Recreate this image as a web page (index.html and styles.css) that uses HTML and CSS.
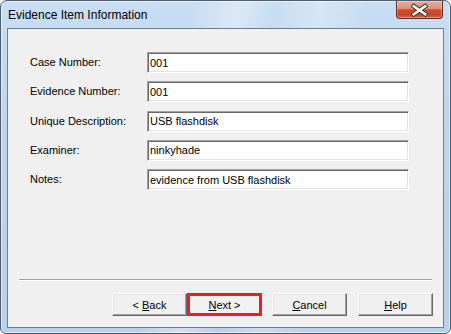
FILE: index.html
```html
<!DOCTYPE html>
<html lang="en">
<head>
  <meta charset="UTF-8" />
  <title>Evidence Item Information</title>
  <link rel="stylesheet" href="styles.css">
</head>
<body>

  <div class="window">
    <!-- title bar -->
    <div class="titlebar">
      <span class="title">Evidence Item Information</span>
      <button class="close" aria-label="Close">
        <svg width="47" height="18" viewBox="0 0 47 18">
          <path d="M17.5 5 L29.5 13.5 M29.5 5 L17.5 13.5" stroke="#3b3b3b" stroke-width="4.6" stroke-linecap="square" fill="none"/>
          <path d="M17.5 5 L29.5 13.5 M29.5 5 L17.5 13.5" stroke="#ffffff" stroke-width="2.6" stroke-linecap="square" fill="none"/>
        </svg>
      </button>
    </div>

    <!-- dialog body -->
    <div class="client">
      <div class="fields">
        <label>Case Number:</label>
        <input class="text" type="text" value="001">
        <label>Evidence Number:</label>
        <input class="text" type="text" value="001">
        <label>Unique Description:</label>
        <input class="text" type="text" value="USB flashdisk">
        <label>Examiner:</label>
        <input class="text" type="text" value="ninkyhade">
        <label>Notes:</label>
        <input class="text" type="text" value="evidence from USB flashdisk">
      </div>

      <div class="separator"></div>

      <div class="buttons">
        <button class="btn">&lt; <u>B</u>ack</button>
        <button class="btn btn-next"><u>N</u>ext &gt;</button>
        <button class="btn btn-cancel"><u>C</u>ancel</button>
        <button class="btn btn-help"><u>H</u>elp</button>
      </div>
    </div>
  </div>

</body>
</html>
```

FILE: styles.css
```css
/* ===== base ===== */
*{box-sizing:border-box;}
html,body{margin:0;height:100%;}
body{
  background:#fff;overflow:hidden;
  font-family:'Liberation Sans',Arial,sans-serif;font-size:11px;color:#000;
}

/* ===== window frame ===== */
.window{
  width:451px;height:334px;
  display:flex;flex-direction:column;
  border:1px solid #4d5c6d;border-radius:7px 7px 6px 6px;
  background:
    linear-gradient(100deg,rgba(255,255,255,0) 38%,rgba(255,255,255,.35) 47%,rgba(255,255,255,0) 54%,rgba(255,255,255,.25) 63%,rgba(255,255,255,0) 72%),
    linear-gradient(#c9def3,#bcd4ec 40%,#b8d0ea);
  box-shadow:inset 0 0 0 1px rgba(255,255,255,.55);
}

/* ===== title bar ===== */
.titlebar{height:27px;display:flex;align-items:flex-start;flex:none;}
.title{
  padding:7px 0 0 7px;font-size:12px;line-height:14px;color:#000;
}
.close{
  margin:0 7px 0 auto;width:47px;height:18px;padding:0;
  border:1px solid #5d2b23;border-top:none;border-radius:0 0 4px 4px;
  background:linear-gradient(#e9ae9e 0%,#dd8e79 45%,#cc4b31 52%,#c8442b 80%,#d8654a 100%);
  box-shadow:inset 0 0 0 1px rgba(255,255,255,.3);
  display:flex;
}

/* ===== client area ===== */
.client{
  flex:1;margin:0 6px 5px;
  border:1px solid #6e7f91;background:#f0f0f0;
  display:flex;flex-direction:column;
  padding-bottom:11px;
}

.fields{
  margin:23px 0 0 22px;
  display:grid;grid-template-columns:117px 262px;
  row-gap:8.25px;align-items:center;
}
.fields label{line-height:13px;}

.text{
  height:21px;margin:0;padding:0 2px;
  font:11px 'Liberation Sans',Arial,sans-serif;color:#000;
  background:#fff;
  border:1px solid;border-color:#a0a0a0 #fff #fff #a0a0a0;
  box-shadow:inset 1px 1px 0 #696969,inset -1px -1px 0 #e3e3e3;
  outline:none;
}

/* ===== separator ===== */
.separator{
  margin:auto 11px 12px;height:2px;
  border-top:1px solid #a0a0a0;border-bottom:1px solid #fff;
}

/* ===== buttons ===== */
.buttons{display:flex;justify-content:flex-end;padding-right:10px;}
.btn{
  width:75px;height:23px;padding:0;
  font:11px 'Liberation Sans',Arial,sans-serif;color:#000;
  background:#f0f0f0;
  border:1px solid;border-color:#fff #696969 #696969 #fff;
  box-shadow:inset -1px -1px 0 #a0a0a0,inset 1px 1px 0 #e3e3e3;
}
.btn u{text-underline-offset:1px;}
.btn-next{border:3px solid #ed1c24;box-shadow:none;background:#f2f2f2;}
.btn-cancel{margin-left:10px;}
.btn-help{margin-left:11px;}
```
